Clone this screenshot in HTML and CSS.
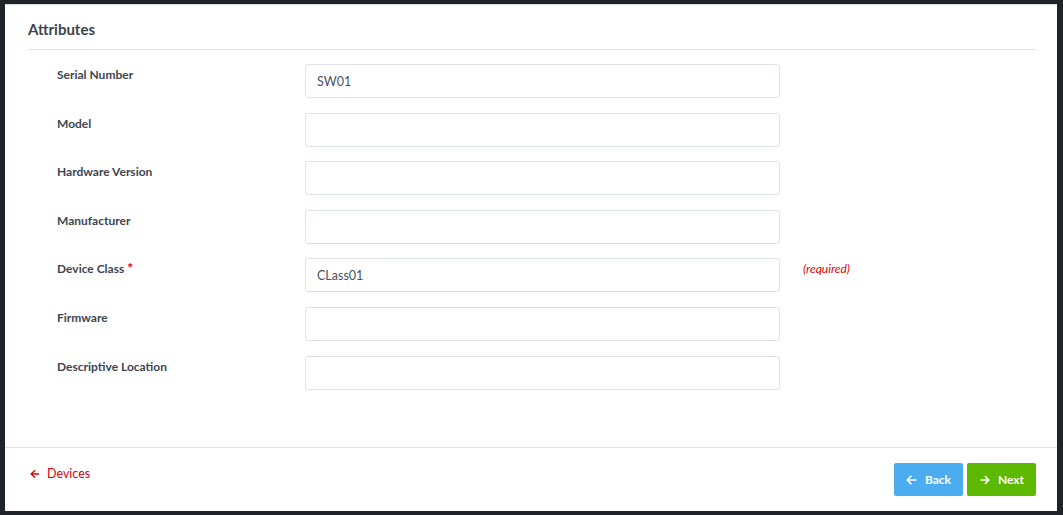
FILE: index.html
```html
<!DOCTYPE html>
<html>
<head>
<meta charset="utf-8">
<link rel="stylesheet" href="styles.css">
</head>
<body>
<div class="panel">
  <div class="content">
    <h2 class="title">Attributes</h2>
    <div class="form">
      <div class="row"><label class="lbl">Serial Number</label><div class="input">SW01</div></div>
      <div class="row"><label class="lbl">Model</label><div class="input"></div></div>
      <div class="row"><label class="lbl">Hardware Version</label><div class="input"></div></div>
      <div class="row"><label class="lbl">Manufacturer</label><div class="input"></div></div>
      <div class="row"><label class="lbl">Device Class <span class="star">*</span></label><div class="input">CLass01</div><span class="req">(required)</span></div>
      <div class="row"><label class="lbl">Firmware</label><div class="input"></div></div>
      <div class="row"><label class="lbl">Descriptive Location</label><div class="input"></div></div>
    </div>
  </div>
  <div class="footer">
    <a class="back-link"><svg width="10" height="10" viewBox="0 0 10 10"><path d="M9 5H1.5M5 1.2L1.2 5 5 8.8" fill="none" stroke="currentColor" stroke-width="1.4"/></svg><span>Devices</span></a>
    <div class="btns">
      <button class="btn btn-back"><svg width="12" height="12" viewBox="0 0 12 12"><path d="M11.5 6H1.5M6 1.3L1.3 6 6 10.7" fill="none" stroke="currentColor" stroke-width="1.8"/></svg>Back</button>
      <button class="btn btn-next"><svg width="12" height="12" viewBox="0 0 12 12"><path d="M0.5 6H10.5M6 1.3L10.7 6 6 10.7" fill="none" stroke="currentColor" stroke-width="1.8"/></svg>Next</button>
    </div>
  </div>
</div>
</body>
</html>
```
FILE: styles.css
```css
* { box-sizing: border-box; }
html, body { margin: 0; height: 100%; }
body {
  background: #202328;
  padding: 4px 6px 4px 5px;
  font-family: "Lato", "Open Sans", sans-serif;
}
.panel {
  background: #fff;
  height: 507px;
  display: flex;
  flex-direction: column;
  border-top: 1px solid #d8dde3;
}
.content {
  flex: 1;
  padding: 14px 21px 0 23px;
}
.title {
  margin: 0;
  font-size: 15px;
  font-weight: 700;
  color: #3c434f;
  padding-bottom: 10px;
  border-bottom: 1px solid #e4e4e4;
  line-height: 20px;
}
.form {
  padding: 14px 0 0 29px;
  display: flex;
  flex-direction: column;
  gap: 14.6px;
}
.row {
  display: flex;
  align-items: flex-start;
}
.lbl {
  width: 248px;
  font-size: 12px;
  font-weight: 700;
  color: #3e4551;
  line-height: 16px;
  padding-top: 3px;
}
.star { color: #e00000; font-size: 14px; line-height: 12px; }
.input {
  width: 475px;
  height: 34px;
  border: 1px solid #dfe2e8;
  border-radius: 3px;
  font-size: 12.5px;
  color: #4a5260;
  padding: 1px 11px 0;
  line-height: 32px;
}
.req {
  margin-left: 23px;
  font-size: 12px;
  font-style: italic;
  color: #e00000;
  line-height: 16px;
  padding-top: 3px;
}
.footer {
  height: 64px;
  border-top: 1px solid #e2e2e2;
  display: flex;
  justify-content: space-between;
  align-items: flex-start;
  padding: 15px 21px 0 25px;
}
.back-link {
  display: flex;
  align-items: center;
  gap: 7px;
  color: #d9000d;
  font-size: 12.5px;
  margin-top: 3px;
  line-height: 16px;
}
.btns { display: flex; gap: 4px; }
.btn {
  border: 0;
  border-radius: 2px;
  height: 33px;
  color: #fff;
  font-family: inherit;
  font-weight: 700;
  font-size: 12px;
  display: flex;
  align-items: center;
  gap: 8px;
  padding: 0 12px;
}
.btn-back { background: #4badf0; width: 69px; }
.btn-next { background: #5db900; width: 69px; padding-left: 13px; }
```
